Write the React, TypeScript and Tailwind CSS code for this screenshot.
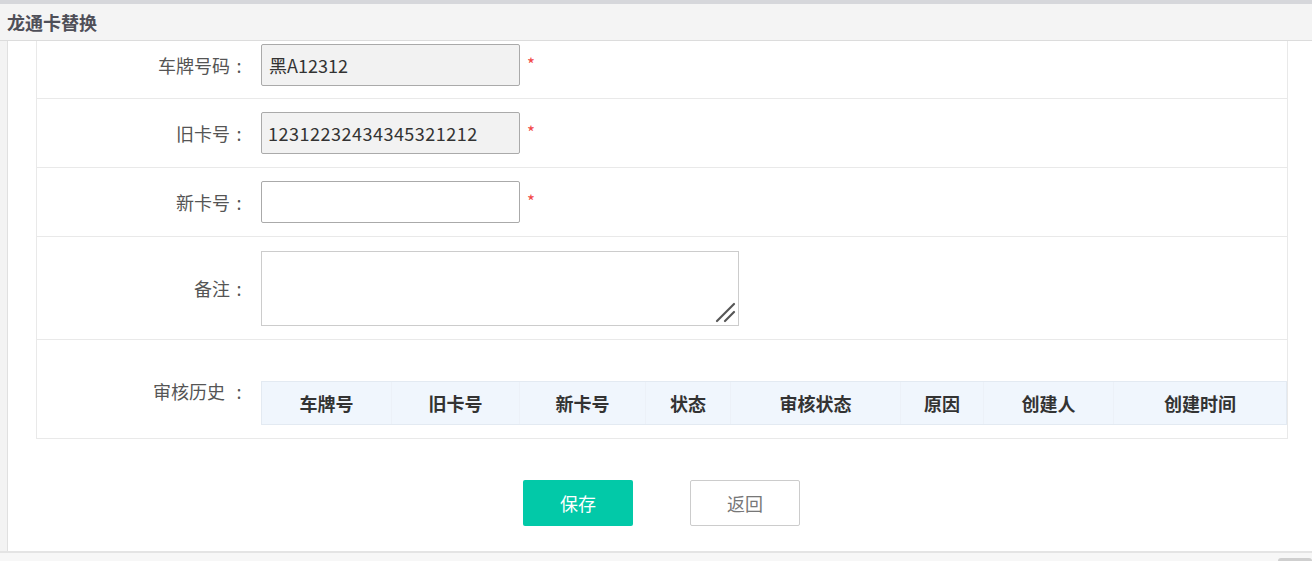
import React from "react";

const cols: { label: string; w: string }[] = [
  { label: "车牌号", w: "w-[130px]" },
  { label: "旧卡号", w: "w-[128px]" },
  { label: "新卡号", w: "w-[126px]" },
  { label: "状态", w: "w-[85px]" },
  { label: "审核状态", w: "w-[170px]" },
  { label: "原因", w: "w-[83px]" },
  { label: "创建人", w: "w-[130px]" },
  { label: "创建时间", w: "w-[172px]" },
];

function Label({ text, space }: { text: string; space?: boolean }) {
  return (
    <div className="w-[224px] shrink-0 pr-[13px] flex justify-end text-[18px] leading-[20px] text-[#555]">
      <span>{text}</span>
      {space && <span className="w-[5px]" />}
      <span className="w-[18px] text-center">:</span>
    </div>
  );
}

function Star() {
  return <span className="ml-[7px] mt-[11px] text-[17px] leading-none text-[#f24848]">*</span>;
}

export default function App() {
  return (
    <div className="w-[1312px] h-[561px] overflow-hidden bg-white flex flex-col font-['Noto_Sans_CJK_SC','Noto_Sans',sans-serif]">
      <div className="h-[4px] shrink-0 bg-[#d6d7db]" />
      <div className="h-[37px] shrink-0 bg-[#f4f4f4] border-b border-[#dcdcdc] flex items-center pl-[7px] text-[18px] font-bold text-[#4f4f58]">
        龙通卡替换
      </div>
      <div className="h-[510px] shrink-0 flex">
        <div className="w-[8px] shrink-0 bg-[#f3f3f3] border-r border-[#e0e0e0]" />
        <div className="flex-1 flex flex-col">
          <div className="ml-[28px] w-[1252px] border-l border-r border-[#e9e9e9]">
            {/* row 1 */}
            <div className="h-[58px] border-b border-[#e9e9e9] flex items-start pt-[3px]">
              <div className="h-[42px] flex items-center">
                <Label text="车牌号码" />
              </div>
              <div className="flex items-start">
                <div className="w-[259px] h-[42px] border border-[#aaaaaa] bg-[#f2f2f2] rounded-[2px] flex items-center pl-[7px] text-[18px] text-[#333]">
                  黑A12312
                </div>
                <Star />
              </div>
            </div>
            {/* row 2 */}
            <div className="h-[69px] border-b border-[#e9e9e9] flex items-center">
              <Label text="旧卡号" />
              <div className="flex items-start">
                <div className="w-[259px] h-[42px] border border-[#aaaaaa] bg-[#f2f2f2] rounded-[2px] flex items-center pl-[6px] text-[18px] tracking-[0.5px] text-[#333]">
                  12312232434345321212
                </div>
                <Star />
              </div>
            </div>
            {/* row 3 */}
            <div className="h-[69px] border-b border-[#e9e9e9] flex items-center">
              <Label text="新卡号" />
              <div className="flex items-start">
                <div className="w-[259px] h-[42px] border border-[#aaaaaa] bg-white rounded-[2px]" />
                <Star />
              </div>
            </div>
            {/* row 4 */}
            <div className="h-[103px] border-b border-[#e9e9e9] flex items-center">
              <Label text="备注" />
              <div className="relative w-[478px] h-[75px] border border-[#cccccc] bg-white">
                <svg className="absolute right-[2px] bottom-[2px]" width="22" height="22" viewBox="0 0 22 22">
                  <line x1="3" y1="20" x2="20" y2="3" stroke="#555" strokeWidth="2.2" strokeLinecap="round" />
                  <line x1="11" y1="20" x2="20" y2="11" stroke="#555" strokeWidth="2.2" strokeLinecap="round" />
                </svg>
              </div>
            </div>
            {/* row 5 */}
            <div className="h-[99px] border-b border-[#e9e9e9] flex items-start pt-[41px]">
              <Label text="审核历史" space />
              <div className="w-[1026px] h-[44px] border border-[#e3eaf2] bg-[#f0f6fd] flex">
                {cols.map((c, i) => (
                  <div
                    key={c.label}
                    className={`${c.w} h-full flex items-center justify-center text-[18px] font-bold text-[#333] ${i < cols.length - 1 ? "border-r border-[#ecf1f8]" : ""}`}
                  >
                    {c.label}
                  </div>
                ))}
              </div>
            </div>
          </div>
          <div className="flex justify-center gap-[57px] pt-[41px] pl-[3px]">
            <button className="w-[110px] h-[46px] bg-[#02c9a8] rounded-[2px] text-white text-[18px]">保存</button>
            <button className="w-[110px] h-[46px] bg-white border border-[#cccccc] rounded-[2px] text-[#777] text-[18px]">返回</button>
          </div>
        </div>
      </div>
      <div className="flex-1 border-t-2 border-[#e4e4e4] bg-[#f7f7f7] flex justify-end">
        <div className="mt-[5px] w-[34px] h-[4px] bg-[#cfcfcf] rounded-t-[3px]" />
      </div>
    </div>
  );
}
